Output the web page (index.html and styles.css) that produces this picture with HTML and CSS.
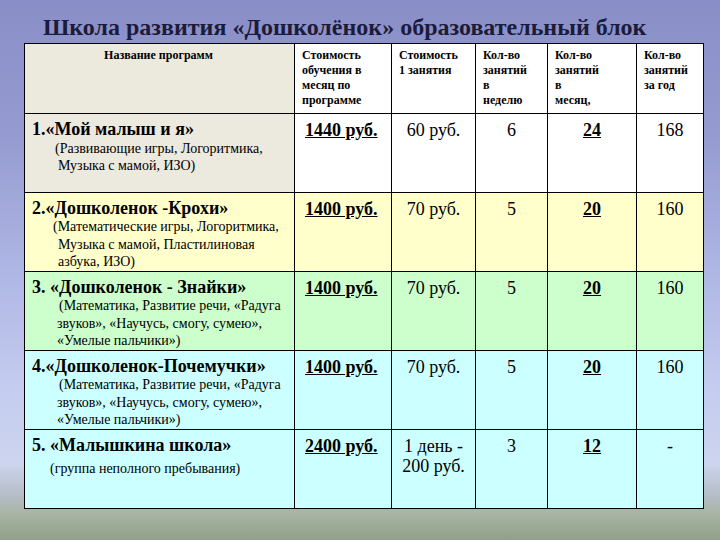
FILE: index.html
```html
<!DOCTYPE html>
<html lang="ru">
<head>
<meta charset="utf-8">
<link rel="stylesheet" href="styles.css">
</head>
<body>
<div class="slide">
  <h1 class="title">Школа развития «Дошколёнок» образовательный блок</h1>
  <table class="prices">
    <colgroup>
      <col class="c1"><col class="c2"><col class="c3"><col class="c4"><col class="c5"><col class="c6">
    </colgroup>
    <thead>
      <tr class="head">
        <th class="hname">Название программ</th>
        <th>Стоимость<br>обучения в<br>месяц по<br>программе</th>
        <th>Стоимость<br>1 занятия</th>
        <th>Кол-во<br>занятий<br>в<br>неделю</th>
        <th>Кол-во<br>занятий<br>в<br>месяц,</th>
        <th>Кол-во<br>занятий<br>за год</th>
      </tr>
    </thead>
    <tbody>
      <tr class="r1">
        <td class="name"><div class="pname">1.«Мой малыш и я»</div><div class="pdesc d1">(Развивающие игры, Логоритмика,<br>Музыка с мамой, ИЗО)</div></td>
        <td class="price">1440 руб.</td>
        <td class="val">60 руб.</td>
        <td class="val">6</td>
        <td class="val strong">24</td>
        <td class="val">168</td>
      </tr>
      <tr class="r2">
        <td class="name"><div class="pname">2.«Дошколенок -Крохи»</div><div class="pdesc d2">(Математические игры, Логоритмика,<br>Музыка с мамой, Пластилиновая<br>азбука, ИЗО)</div></td>
        <td class="price">1400 руб.</td>
        <td class="val">70 руб.</td>
        <td class="val">5</td>
        <td class="val strong">20</td>
        <td class="val">160</td>
      </tr>
      <tr class="r3">
        <td class="name"><div class="pname">3. «Дошколенок - Знайки»</div><div class="pdesc d3">(Математика, Развитие речи, «Радуга<br>звуков», «Научусь, смогу, сумею»,<br>«Умелые пальчики»)</div></td>
        <td class="price">1400 руб.</td>
        <td class="val">70 руб.</td>
        <td class="val">5</td>
        <td class="val strong">20</td>
        <td class="val">160</td>
      </tr>
      <tr class="r4">
        <td class="name"><div class="pname">4.«Дошколенок-Почемучки»</div><div class="pdesc d3">(Математика, Развитие речи, «Радуга<br>звуков», «Научусь, смогу, сумею»,<br>«Умелые пальчики»)</div></td>
        <td class="price">1400 руб.</td>
        <td class="val">70 руб.</td>
        <td class="val">5</td>
        <td class="val strong">20</td>
        <td class="val">160</td>
      </tr>
      <tr class="r5">
        <td class="name"><div class="pname">5. «Малышкина школа»</div><div class="pdesc d5">(группа неполного пребывания)</div></td>
        <td class="price">2400 руб.</td>
        <td class="val two">1 день -<br>200 руб.</td>
        <td class="val">3</td>
        <td class="val strong">12</td>
        <td class="val">-</td>
      </tr>
    </tbody>
  </table>
</div>
</body>
</html>
```

FILE: styles.css
```css
html, body {
  margin: 0;
  padding: 0;
}
body {
  width: 720px;
  height: 540px;
  overflow: hidden;
  font-family: "Liberation Serif", "Times New Roman", serif;
  color: #000;
}
.slide {
  width: 720px;
  height: 540px;
  box-sizing: border-box;
  padding: 14px 0 0 24px;
  background: linear-gradient(180deg, #8a8ec8 0%, #959bd0 25%, #aeb6e4 50%, #c4ccf0 72%, #ccd4ee 86%, #b4bcc4 92%, #a8b4a4 95%, #8fa18a 100%);
}
.title {
  margin: 0 0 3px 19px;
  font-family: "Liberation Serif", "Times New Roman", serif;
  font-size: 24px;
  line-height: 26px;
  font-weight: bold;
  color: #1b1b3a;
  white-space: nowrap;
}
.prices {
  border-collapse: collapse;
  table-layout: fixed;
  width: 679px;
  border: 1.5px solid #000;
  font-family: "Liberation Serif", "Times New Roman", serif;
}
.c1 { width: 270px; }
.c2 { width: 97px; }
.c3 { width: 84px; }
.c4 { width: 72px; }
.c5 { width: 89px; }
.c6 { width: 67px; }
.prices th, .prices td {
  border: 1px solid #000;
  vertical-align: top;
  padding: 0;
}
.prices .head th {
  height: 70px;
  background: #fff;
  font-size: 12px;
  line-height: 15px;
  font-weight: bold;
  text-align: left;
  padding: 4px 2px 0 7px;
  box-sizing: border-box;
  white-space: nowrap;
}
.prices .head th.hname {
  background: #ece9dd;
  text-align: center;
  padding-left: 0;
}
.prices tbody tr { height: 79px; }
.prices tbody td { padding-top: 5px; }
.prices .r1 td { background: #fff; }
.prices .r1 td.name { background: #ece9df; }
.prices .r2 td { background: #ffffcc; }
.prices .r3 td { background: #ccffcc; }
.prices .r4 td, .prices .r5 td { background: #ccffff; }
.prices td.name { padding-left: 7px; }
.pname {
  font-size: 18px;
  font-weight: bold;
  line-height: 21px;
  white-space: nowrap;
}
.pdesc {
  font-size: 14px;
  line-height: 17.5px;
  white-space: nowrap;
}
.d1 { padding-left: 26px; text-indent: -3px; margin-top: 1px; line-height: 16.5px; }
.d2 { padding-left: 26px; text-indent: -5px; margin-top: -1px; }
.d3 { padding-left: 25px; text-indent: 2px; margin-top: -1px; }
.d5 { padding-left: 18px; margin-top: 4px; }
.prices td.price {
  font-size: 18px;
  font-weight: bold;
  text-decoration: underline;
  padding-left: 10px;
  padding-top: 6px;
  line-height: 20px;
}
.prices td.val {
  font-size: 18px;
  text-align: center;
  line-height: 20px;
  padding-top: 6px;
}
.prices td.val.strong {
  font-weight: bold;
  text-decoration: underline;
}
```
